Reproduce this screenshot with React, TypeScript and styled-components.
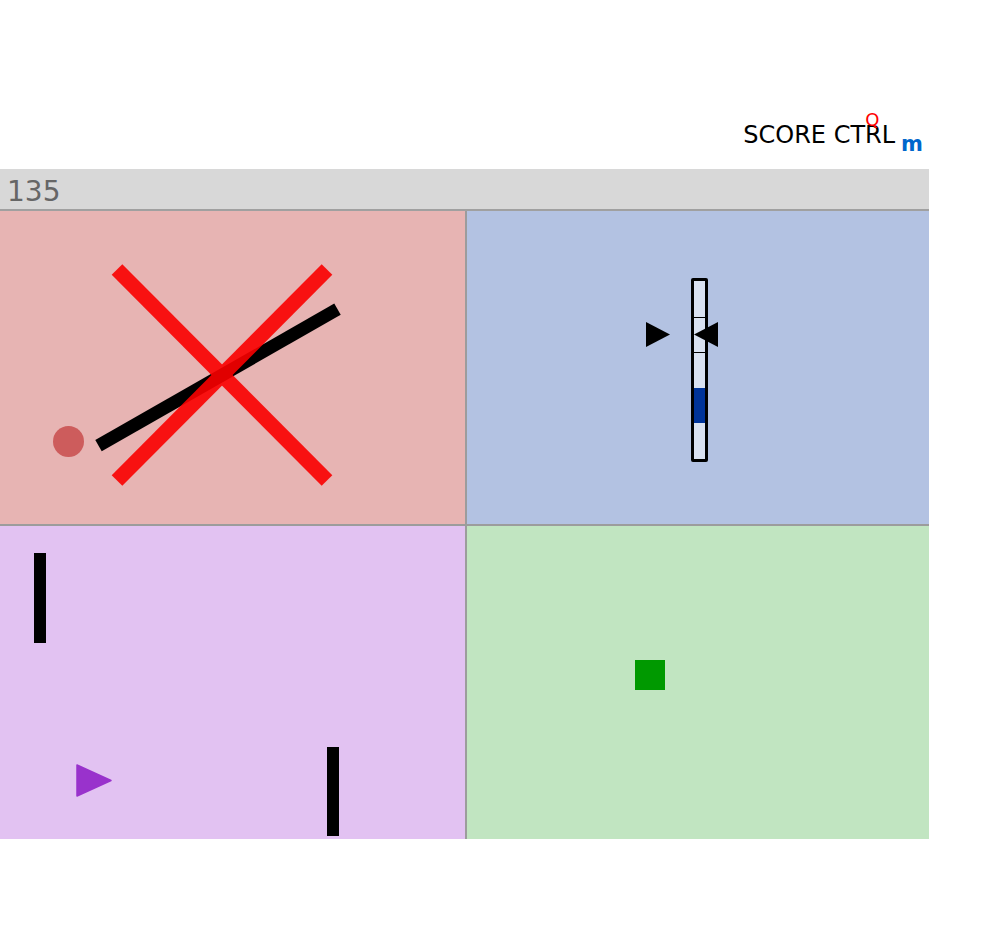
import React from 'react'
import styled, { createGlobalStyle } from 'styled-components'

const GlobalStyle = createGlobalStyle`
  html, body {
    margin: 0;
    padding: 0;
    background: #fff;
    font-family: "DejaVu Sans", Verdana, sans-serif;
  }
`

type Segment = { tick: boolean; filled: boolean }

const segments: Segment[] = [
    { tick: false, filled: false },
    { tick: true, filled: false },
    { tick: true, filled: false },
    { tick: false, filled: true },
    { tick: false, filled: false },
]

export default function App() {
    return (
        <Page>
            <GlobalStyle />
            <Header>
                <Title>
                    SCORE CTRL
                    <QMark>Q</QMark>
                </Title>
                <SubMark>m</SubMark>
            </Header>
            <ScoreBar>135</ScoreBar>
            <Board>
                <Panel $bg="#e7b4b3">
                    <Canvas viewBox="0 0 465 313">
                        <line x1="98.5" y1="234.7" x2="337.5" y2="98.2" stroke="#000" strokeWidth="13" />
                        <g opacity="0.9">
                            <line x1="117" y1="58.5" x2="327" y2="269.5" stroke="#fa0000" strokeWidth="15" />
                            <line x1="327" y1="58.5" x2="117" y2="269.5" stroke="#fa0000" strokeWidth="15" />
                        </g>
                    </Canvas>
                    <Ball $x={53} $y={215} />
                </Panel>
                <Panel $bg="#b3c2e2">
                    <Slider>
                        {segments.map((s, i) => (
                            <SliderSegment key={i} $tick={s.tick} $filled={s.filled} />
                        ))}
                    </Slider>
                    <Arrow $x={179} $y={111} viewBox="0 0 24 25">
                        <polygon points="0,0 24,12.5 0,25" fill="#000" />
                    </Arrow>
                    <Arrow $x={227} $y={111} viewBox="0 0 24 25">
                        <polygon points="24,0 0,12.5 24,25" fill="#000" />
                    </Arrow>
                </Panel>
                <Panel $bg="#e2c2f2">
                    <Post $x={34} $y={27} $h={90} />
                    <Post $x={327} $y={221} $h={89} />
                    <Pointer $x={76} $y={238} viewBox="0 0 36 33">
                        <polygon
                            points="1,1 35,16.5 1,32"
                            fill="#9932cc"
                            stroke="#9932cc"
                            strokeWidth="1.5"
                            strokeLinejoin="round"
                        />
                    </Pointer>
                </Panel>
                <Panel $bg="#c1e5c1">
                    <Block $x={168} $y={134} />
                </Panel>
            </Board>
        </Page>
    )
}

const Page = styled.div`
  width: 929px;
`

const Header = styled.header`
  height: 169px;
  box-sizing: border-box;
  padding: 121px 6px 0 0;
  display: flex;
  justify-content: flex-end;
  align-items: flex-start;
`

const Title = styled.span`
  position: relative;
  color: #000;
  font-size: 24px;
  line-height: 28px;
  white-space: nowrap;
`

const QMark = styled.span`
  position: absolute;
  left: 122px;
  top: -10px;
  color: #ff0000;
  font-size: 18px;
  line-height: 18px;
`

const SubMark = styled.span`
  position: relative;
  top: 9px;
  margin-left: 6px;
  color: #0066cc;
  font-size: 21px;
  font-weight: bold;
  line-height: 28px;
`

const ScoreBar = styled.div`
  height: 42px;
  box-sizing: border-box;
  padding: 5px 0 0 7px;
  background: #d8d8d8;
  border-bottom: 2px solid #a0a0a0;
  color: #666;
  font-size: 28px;
  line-height: 35px;
`

const Board = styled.div`
  display: grid;
  grid-template-columns: 465px 1fr;
  grid-template-rows: 313px 313px;
  gap: 2px;
  background: #9c9c9c;
`

const Panel = styled.div<{ $bg: string }>`
  position: relative;
  overflow: hidden;
  background: ${({ $bg }) => $bg};
`

const Canvas = styled.svg`
  position: absolute;
  inset: 0;
  width: 100%;
  height: 100%;
`

const Ball = styled.div<{ $x: number; $y: number }>`
  position: absolute;
  left: ${({ $x }) => $x}px;
  top: ${({ $y }) => $y}px;
  width: 31px;
  height: 31px;
  border-radius: 50%;
  background: #cd5c5c;
`

const Arrow = styled.svg<{ $x: number; $y: number }>`
  position: absolute;
  left: ${({ $x }) => $x}px;
  top: ${({ $y }) => $y}px;
  width: 24px;
  height: 25px;
`

const Slider = styled.div`
  position: absolute;
  left: 224px;
  top: 67px;
  width: 17px;
  height: 184px;
  box-sizing: border-box;
  border: 3px solid #000;
  border-radius: 2px;
  background: rgba(255, 255, 255, 0.5);
  display: flex;
  flex-direction: column;
`

const SliderSegment = styled.div<{ $tick: boolean; $filled: boolean }>`
  flex: 1;
  box-sizing: border-box;
  border-top: 1px solid ${({ $tick }) => ($tick ? '#000' : 'transparent')};
  background: ${({ $filled }) => ($filled ? '#003399' : 'transparent')};
`

const Post = styled.div<{ $x: number; $y: number; $h: number }>`
  position: absolute;
  left: ${({ $x }) => $x}px;
  top: ${({ $y }) => $y}px;
  width: 12px;
  height: ${({ $h }) => $h}px;
  background: #000;
`

const Pointer = styled.svg<{ $x: number; $y: number }>`
  position: absolute;
  left: ${({ $x }) => $x}px;
  top: ${({ $y }) => $y}px;
  width: 36px;
  height: 33px;
`

const Block = styled.div<{ $x: number; $y: number }>`
  position: absolute;
  left: ${({ $x }) => $x}px;
  top: ${({ $y }) => $y}px;
  width: 30px;
  height: 30px;
  background: #009900;
`
